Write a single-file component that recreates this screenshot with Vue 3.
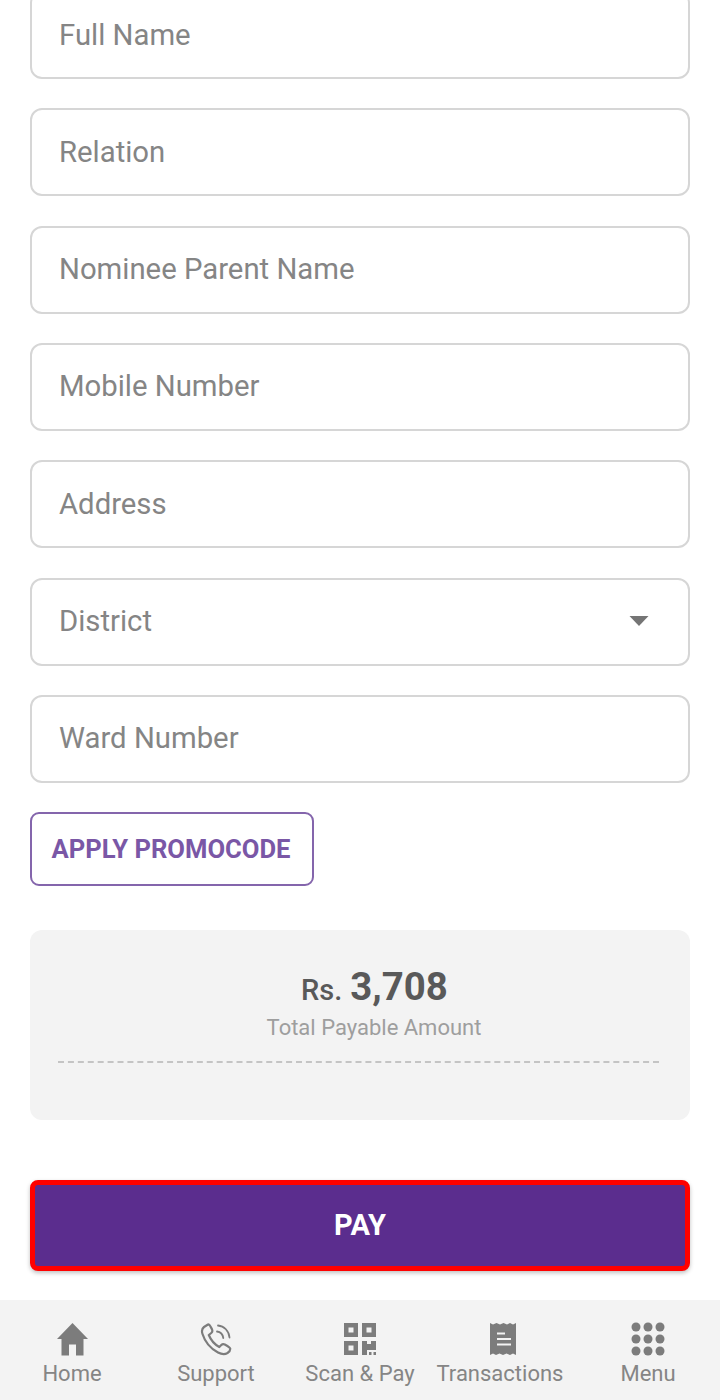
<script setup>
const fields = [
  { label: 'Full Name' },
  { label: 'Relation' },
  { label: 'Nominee Parent Name' },
  { label: 'Mobile Number' },
  { label: 'Address' },
  { label: 'District', select: true },
  { label: 'Ward Number' },
]
</script>

<template>
  <div class="page">
    <main class="content">
      <form class="form" @submit.prevent>
        <div v-for="f in fields" :key="f.label" class="field">
          <span class="placeholder">{{ f.label }}</span>
          <svg v-if="f.select" class="caret" width="20" height="12" viewBox="0 0 20 12"><path d="M0.500 1h19l-9.500 10z" fill="#757575"/></svg>
        </div>
      </form>
      <button type="button" class="promo">APPLY PROMOCODE</button>
      <section class="card">
        <div class="amount"><span class="rs">Rs.</span><span class="value">3,708</span></div>
        <div class="caption">Total Payable Amount</div>
        <div class="dash"></div>
      </section>
      <button type="button" class="pay">PAY</button>
    </main>
    <nav class="nav">
      <div class="item">
        <svg class="icon" width="34" height="34" viewBox="0 0 34 34"><path d="M17.500 1 33 17h-4.500v16.500h-7.500V22.500h-7v11H6.500V17H2z" fill="#7c7c7c"/></svg>
        <span>Home</span>
      </div>
      <div class="item">
        <svg class="icon" width="34" height="34" viewBox="0 0 34 34" fill="none" stroke="#7c7c7c" stroke-linecap="round" stroke-linejoin="round"><path stroke-width="2.200" d="M9 2.500 5 5c-2 1.500-2.500 4-1.500 7 2.500 8 8 14.500 15.500 18.500 3.500 1.800 7 2 9.500.5 2-1.300 2.800-3 2.800-4.200 0-1-1-1.800-5.500-4.300-1.500-.8-2.500-.5-3.500.5l-2 2c-4.500-2.500-8.500-7-10.500-12l2.500-2c1.200-1 1.300-2.200.7-3.700C11.500 4.500 10.500 2 9 2.500z"/><path stroke-width="1.800" d="M18 9.500c3.200.4 5.800 3 6.300 6.500M19 3.500c6.200.5 11 5.500 11.500 12"/></svg>
        <span>Support</span>
      </div>
      <div class="item">
        <svg class="icon" width="34" height="34" viewBox="0 0 34 34"><path fill="#7c7c7c" fill-rule="evenodd" d="M1 1h14v14H1zM5.500 5.500v5h5v-5zM19 1h14v14H19zM23.500 5.500v5h5v-5zM1 19h14v14H1zM5.500 23.500v5h5v-5zM19 19h5v3h4v-3h5v9h-9v5h-5zM26 30h2.500v3H26zM30.500 30H33v3h-2.500z"/></svg>
        <span>Scan &amp; Pay</span>
      </div>
      <div class="item tx">
        <svg class="icon" width="34" height="34" viewBox="0 0 34 34"><path fill="#7c7c7c" fill-rule="evenodd" d="M4 1l3 1.500L10.500 1 14 2.500 17.500 1 21 2.500 24 1l3 1.500L30 1v32l-3-1.500L24 33l-3.500-1.500L17 33l-3.500-1.500L10 33l-3-1.500L4 33zM11 10.500v2h8v-2zM11 16v2h14v-2zM11 21.500v2h14v-2z"/></svg>
        <span>Transactions</span>
      </div>
      <div class="item">
        <svg class="icon" width="34" height="34" viewBox="0 0 34 34" fill="#7c7c7c"><circle cx="5" cy="5" r="4.500"/><circle cx="17" cy="5" r="4.500"/><circle cx="29" cy="5" r="4.500"/><circle cx="5" cy="17" r="4.500"/><circle cx="17" cy="17" r="4.500"/><circle cx="29" cy="17" r="4.500"/><circle cx="5" cy="29" r="4.500"/><circle cx="17" cy="29" r="4.500"/><circle cx="29" cy="29" r="4.500"/></svg>
        <span>Menu</span>
      </div>
    </nav>
  </div>
</template>

<style>
html, body { margin: 0; background: #fff; }
</style>

<style scoped>
.page {
  width: 720px;
  height: 1400px;
  overflow: hidden;
  display: flex;
  flex-direction: column;
  font-family: Roboto, "Liberation Sans", sans-serif;
  background: #fff;
}
.content {
  flex: 1;
  min-height: 0;
  display: flex;
  flex-direction: column;
  align-items: flex-start;
  padding: 0 30px;
  margin-top: -9px;
}
.form {
  display: flex;
  flex-direction: column;
  gap: 29.330px;
  align-self: stretch;
}
.field {
  height: 88px;
  box-sizing: border-box;
  border: 2px solid #d6d6d6;
  border-radius: 12px;
  padding: 0 39px 1px 27px;
  display: flex;
  align-items: center;
  justify-content: space-between;
}
.placeholder {
  font-size: 29.300px;
  color: #858585;
}
.promo {
  margin-top: 29px;
  width: 284px;
  height: 74px;
  box-sizing: border-box;
  border: 2px solid #8465ac;
  border-radius: 9px;
  background: #fff;
  color: #7a57a6;
  font: 700 25.600px Roboto, sans-serif;
  padding: 0 2px 0 0;
}
.card {
  margin-top: 44px;
  align-self: stretch;
  height: 190px;
  box-sizing: border-box;
  background: #f3f3f3;
  border-radius: 12px;
  padding: 33px 31px 0 28px;
  display: flex;
  flex-direction: column;
  align-items: center;
}
.amount {
  color: #595959;
  line-height: 48px;
  padding-left: 32px;
}
.rs { font-size: 29px; font-weight: 500; margin-right: 8px; }
.value { font-size: 38.400px; font-weight: 700; }
.caption {
  color: #9e9e9e;
  font-size: 22px;
  line-height: 30px;
  margin-top: -6px;
  padding-left: 31px;
}
.dash {
  align-self: stretch;
  margin-top: 18px;
  border-top: 2px dashed #c4c4c4;
}
.pay {
  margin-top: 60px;
  align-self: stretch;
  height: 91px;
  box-sizing: border-box;
  border: 5px solid #ff0000;
  border-radius: 8px;
  background: #5b2d8e;
  color: #fff;
  font: 700 29px Roboto, sans-serif;
  box-shadow: 0 2px 4px rgba(0, 0, 0, 0.25);
  padding: 0;
}
.nav {
  height: 100px;
  flex: none;
  background: #f3f3f3;
  display: grid;
  grid-template-columns: repeat(5, 144px);
}
.item {
  display: flex;
  flex-direction: column;
  align-items: center;
  padding-top: 22px;
  color: #858585;
  font-size: 22px;
  line-height: 30px;
  white-space: nowrap;
}
.icon { display: block; margin-bottom: 3px; }
.tx .icon { margin-right: 2px; }
.tx span { margin-right: 8px; }
</style>
